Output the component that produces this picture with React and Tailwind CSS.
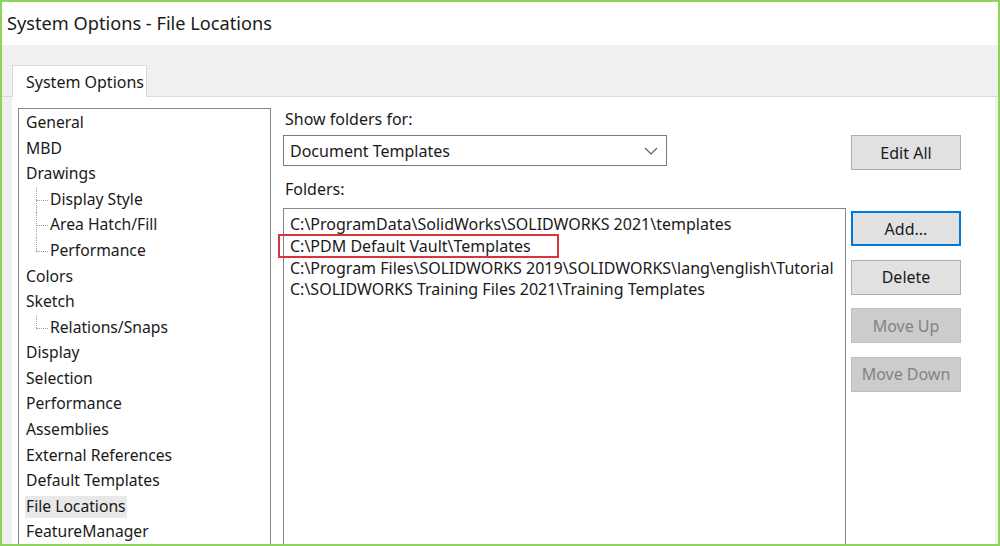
import React from 'react';

const font = { fontFamily: '"Noto Sans", "Open Sans", sans-serif' };

const treeItems = [
  { label: 'General' },
  { label: 'MBD' },
  { label: 'Drawings' },
  { label: 'Display Style', child: 'mid' },
  { label: 'Area Hatch/Fill', child: 'mid' },
  { label: 'Performance', child: 'last' },
  { label: 'Colors' },
  { label: 'Sketch' },
  { label: 'Relations/Snaps', child: 'last' },
  { label: 'Display' },
  { label: 'Selection' },
  { label: 'Performance' },
  { label: 'Assemblies' },
  { label: 'External References' },
  { label: 'Default Templates' },
  { label: 'File Locations', selected: true },
  { label: 'FeatureManager' },
];

const folders = [
  'C:\\ProgramData\\SolidWorks\\SOLIDWORKS 2021\\templates',
  'C:\\PDM Default Vault\\Templates',
  'C:\\Program Files\\SOLIDWORKS 2019\\SOLIDWORKS\\lang\\english\\Tutorial',
  'C:\\SOLIDWORKS Training Files 2021\\Training Templates',
];

const TreeRow = ({ item }) => (
  <div className="flex items-center h-[25.6px] text-[15.7px] text-[#1a1a1a] leading-none">
    {item.child && (
      <div className="relative w-[24px] self-stretch shrink-0">
        <div
          className={`absolute left-[10px] top-0 w-0 border-l border-dotted border-[#a0a0a0] ${
            item.child === 'last' ? 'h-1/2' : 'h-full'
          }`}
        />
        <div className="absolute left-[10px] top-1/2 w-[12px] h-0 border-t border-dotted border-[#a0a0a0]" />
      </div>
    )}
    <span
      className={`px-[1px] py-[3px] -ml-[1px] ${item.selected ? 'bg-[#e8e8e8]' : ''}`}
    >
      {item.label}
    </span>
  </div>
);

const Button = ({ children, variant = 'normal' }) => {
  const styles = {
    normal: 'bg-[#e1e1e1] border border-[#adadad] text-[#1a1a1a]',
    default: 'bg-[#e1e1e1] border-2 border-[#0078d7] text-[#1a1a1a]',
    disabled: 'bg-[#cccccc] border border-[#bfbfbf] text-[#838383]',
  };
  return (
    <div
      className={`w-[110px] h-[35px] flex items-center justify-center text-[16px] ${styles[variant]}`}
    >
      {children}
    </div>
  );
};

export default function App() {
  return (
    <div
      style={font}
      className="w-[1000px] h-[546px] overflow-hidden border-2 border-[#8fd35c] bg-[#f0f0f0] flex flex-col"
    >
      {/* Title bar */}
      <div className="h-[43px] shrink-0 bg-white flex items-center pl-[5px] text-[18.2px] text-[#1a1a1a]">
        System Options - File Locations
      </div>

      {/* Tab strip */}
      <div className="h-[52px] shrink-0 bg-[#f0f0f0] flex items-end pl-[10px] border-b border-[#d9d9d9]">
        <div className="h-[32px] w-[135px] -mb-[1px] bg-white border border-[#d9d9d9] border-b-0 flex items-center pl-[13px] text-[16px] text-[#1a1a1a]">
          System Options
        </div>
      </div>

      {/* Content */}
      <div className="flex-1 min-h-0 bg-white ml-[10px] mr-[3px] flex pl-[6px] pt-[11px] gap-[12px]">
        {/* Tree */}
        <div className="w-[253px] shrink-0 border border-[#828790] border-b-0 pl-[7px] pt-[1px] overflow-hidden">
          {treeItems.map((item, i) => (
            <TreeRow key={i} item={item} />
          ))}
        </div>

        {/* Right side */}
        <div className="flex-1 flex gap-[5px]">
          <div className="w-[563px] flex flex-col">
            <div className="h-[22px] flex items-center pl-[2px] text-[16px] text-[#1a1a1a]">
              Show folders for:
            </div>
            <div className="mt-[5px] h-[31px] w-[384px] border border-[#7a7a7a] flex items-center justify-between pl-[6px] pr-[8px] text-[16px] text-[#1a1a1a]">
              <span>Document Templates</span>
              <svg width="14" height="8" viewBox="0 0 14 8" fill="none">
                <path d="M1 1L7 7L13 1" stroke="#5a5a5a" strokeWidth="1.1" />
              </svg>
            </div>
            <div className="mt-[12px] h-[22px] flex items-center pl-[2px] text-[16px] text-[#1a1a1a]">
              Folders:
            </div>
            <div className="mt-[8px] flex-1 border border-[#828790] border-b-0 pt-[4.5px] pl-[6px] text-[16px] text-[#1a1a1a]">
              {folders.map((f, i) => (
                <div key={i} className="h-[21.7px] flex items-center">
                  <span
                    className={
                      i === 1
                        ? '-ml-[12px] pl-[10px] pr-[26px] h-[24px] flex items-center border-2 border-[#d8353b]'
                        : ''
                    }
                  >
                    {f}
                  </span>
                </div>
              ))}
            </div>
          </div>

          {/* Buttons */}
          <div className="flex flex-col pt-[27px]">
            <Button>Edit All</Button>
            <div className="mt-[41px] flex flex-col gap-[13.5px]">
              <Button variant="default">Add...</Button>
              <Button>Delete</Button>
              <Button variant="disabled">Move Up</Button>
              <Button variant="disabled">Move Down</Button>
            </div>
          </div>
        </div>
      </div>
    </div>
  );
}
